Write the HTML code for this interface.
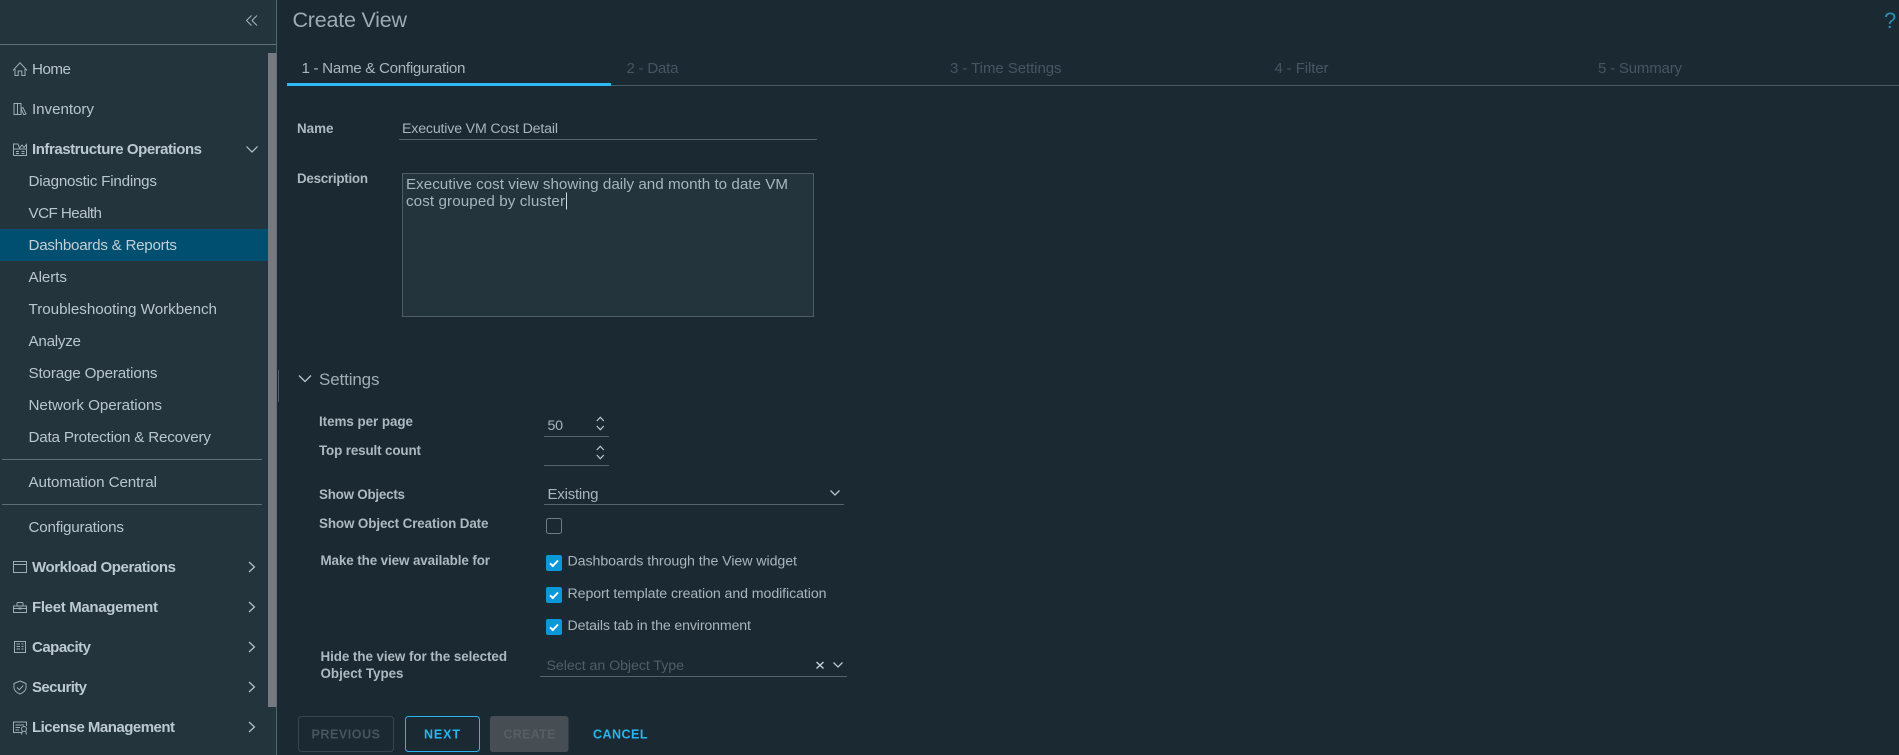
<!DOCTYPE html>
<html lang="en">
<head>
<meta charset="utf-8">
<title>Create View</title>
<style>
html,body{margin:0;padding:0;width:1899px;height:755px;overflow:hidden;background:#1b2a32}
svg{display:block}
text{font-family:"Liberation Sans",Arial,sans-serif;white-space:pre}
.n{font-size:15.2px;fill:#bac6cd}
.b{font-size:15px;font-weight:bold;fill:#bcc9d1}
.l{font-size:13.4px;font-weight:bold;fill:#adb9c0}
.v{font-size:14.2px;fill:#a9b5bc}
.o{font-size:15px;fill:#465560}
.btn{font-size:12.5px;font-weight:bold}
.ic{fill:none;stroke:#9eacb4;stroke-width:1}
.ch{fill:none;stroke:#b9c5cc;stroke-width:1.4}
</style>
</head>
<body>
<svg width="1899" height="755" viewBox="0 0 1899 755" xmlns="http://www.w3.org/2000/svg">
<rect width="1899" height="755" fill="#1b2a32"/>
<!-- sidebar -->
<rect x="0" y="0" width="276" height="755" fill="#23343d"/>
<rect x="276" y="0" width="1" height="755" fill="#55646c"/>
<rect x="0" y="44" width="276" height="1" fill="#5f6f77"/>
<rect x="0" y="229" width="268" height="32" fill="#004f70"/>
<rect x="268" y="53" width="8.5" height="654" fill="#747a80"/>
<rect x="278" y="370" width="1" height="32" fill="#4f5e66"/>
<path class="ch" d="M251.5 15.5 246.5 20.5 251.5 25.5M257 15.5 252 20.5 257 25.5" style="stroke-width:1;stroke:#a9b6bd"/>
<!-- icons -->
<path class="ic" d="M13 70.5 20 62.8 27 70.5M15 69V75.5H18.2V71H21.8V75.5H25V69"/>
<path class="ic" d="M14 103.5H17.5V114.5H14ZM17.5 103.5H21V114.5H17.5ZM21 108.5 23 107.5 26 114 23.8 114.8Z"/>
<path class="ic" d="M13.5 155.5V143.5M13.5 155.5H26.5V144.5L24 147.5 22 145 19.5 148 18 144H13.5M16 151.5H19M16 153.5H19M21.5 151.5H24.5M21.5 153.5H24.5M13.5 149H26.5"/>
<path class="ic" d="M13.5 561.5H26.5V572.5H13.5ZM13.5 564.5H26.5"/>
<path class="ic" d="M13.5 606H26.5V612.5H13.5ZM17 606V603.5Q17 602.5 18 602.5H22Q23 602.5 23 603.5V606M13.5 608.5H18.5M21.5 608.5H26.5"/>
<rect x="18.5" y="607.5" width="3" height="2" fill="#9eacb4"/>
<path class="ic" d="M14.5 641.5H25.5V652.5H14.5ZM16.5 644H20M16.5 646.5H20M16.5 649H20M21.5 644H23.5M21.5 646.5H23.5M21.5 649H23.5"/>
<path class="ic" d="M20 681 26 683.5V687.5Q26 691.5 20 694 14 691.5 14 687.5V683.5ZM17 687.5 19.3 689.8 23.2 685.5"/>
<path class="ic" d="M22 732.5H13.5V722H26.5V726M15.5 725H24M15.5 727.5H20M15.5 730H19"/>
<circle class="ic" cx="24" cy="729" r="2.5"/>
<path class="ic" d="M22.3 731 21.5 734.5M25.7 731 26.5 734.5"/>
<!-- nav text -->
<text class="n" x="32" y="74" textLength="39">Home</text>
<text class="n" x="32" y="114" textLength="62">Inventory</text>
<text class="b" x="32" y="154" textLength="170">Infrastructure Operations</text>
<text class="n" x="28.5" y="186" textLength="128.5">Diagnostic Findings</text>
<text class="n" x="28.5" y="218" textLength="73.5">VCF Health</text>
<text class="n" x="28.5" y="250" textLength="148.5" style="fill:#c3cfd6">Dashboards &amp; Reports</text>
<text class="n" x="28.5" y="282" textLength="38.5">Alerts</text>
<text class="n" x="28.5" y="314" textLength="188.5">Troubleshooting Workbench</text>
<text class="n" x="28.5" y="346" textLength="52.5">Analyze</text>
<text class="n" x="28.5" y="378" textLength="129">Storage Operations</text>
<text class="n" x="28.5" y="410" textLength="133.5">Network Operations</text>
<text class="n" x="28.5" y="442" textLength="182.5">Data Protection &amp; Recovery</text>
<rect x="2" y="459" width="260" height="1" fill="#5f6f77"/>
<text class="n" x="28.5" y="487" textLength="128.5">Automation Central</text>
<rect x="2" y="504" width="260" height="1" fill="#5f6f77"/>
<text class="n" x="28.5" y="532" textLength="95.5">Configurations</text>
<text class="b" x="32" y="572" textLength="144">Workload Operations</text>
<text class="b" x="32" y="612" textLength="126">Fleet Management</text>
<text class="b" x="32" y="652" textLength="59">Capacity</text>
<text class="b" x="32" y="692" textLength="55">Security</text>
<text class="b" x="32" y="732" textLength="143">License Management</text>
<path class="ch" d="M246.5 146.5 252 152 257.5 146.5" style="stroke-width:1.2"/>
<path class="ch" d="M249 562 254.5 567 249 572M249 602 254.5 607 249 612M249 642 254.5 647 249 652M249 682 254.5 687 249 692M249 722 254.5 727 249 732" style="stroke-width:1.2"/>
<!-- header -->
<text x="292.5" y="27" font-size="21.5" textLength="114.5" fill="#9dabb3">Create View</text>
<text x="1884" y="28" font-size="22" textLength="11" fill="#2a8fb6">?</text>
<!-- tabs -->
<rect x="611" y="85" width="1288" height="1" fill="#4a5a62"/>
<rect x="287" y="83" width="324" height="3" fill="#2fb7f3"/>
<text class="n" x="301.5" y="73" textLength="164" style="fill:#aab6bd">1 - Name &amp; Configuration</text>
<text class="o" x="626.5" y="73" textLength="52">2 - Data</text>
<text class="o" x="950" y="73" textLength="111.5">3 - Time Settings</text>
<text class="o" x="1274.5" y="73" textLength="54">4 - Filter</text>
<text class="o" x="1598" y="73" textLength="84">5 - Summary</text>
<!-- name -->
<text class="l" x="297" y="133" textLength="36.5">Name</text>
<text class="v" x="402" y="133" textLength="156">Executive VM Cost Detail</text>
<rect x="399" y="139" width="418" height="1" fill="#55646c"/>
<!-- description -->
<text class="l" x="297" y="183" textLength="71">Description</text>
<rect x="402.5" y="173.5" width="411" height="143" fill="#23343d" stroke="#4f5e66"/>
<text class="n" x="406" y="189" textLength="382" style="fill:#a9b5bc">Executive cost view showing daily and month to date VM</text>
<text class="n" x="406" y="206" textLength="159" style="fill:#a9b5bc">cost grouped by cluster</text>
<rect x="566" y="192.5" width="1" height="17" fill="#d5dde2"/>
<!-- settings -->
<path class="ch" d="M299 375.5 305 381.5 311 375.5" style="stroke-width:1.3"/>
<text x="319" y="385" font-size="17" textLength="60.5" fill="#a0adb4">Settings</text>
<text class="l" x="319" y="426" textLength="94">Items per page</text>
<text class="v" x="547.5" y="430" textLength="15.5">50</text>
<rect x="544" y="436" width="65" height="1" fill="#55646c"/>
<path class="ch" d="M596.8 421 600.3 417.3 603.8 421M596.8 426 600.3 429.7 603.8 426" style="stroke-width:1.2"/>
<text class="l" x="319" y="455" textLength="102">Top result count</text>
<rect x="544" y="465" width="65" height="1" fill="#55646c"/>
<path class="ch" d="M596.8 450 600.3 446.3 603.8 450M596.8 455 600.3 458.7 603.8 455" style="stroke-width:1.2"/>
<text class="l" x="319" y="499" textLength="86">Show Objects</text>
<text x="547.5" y="499" font-size="15" textLength="51" fill="#a9b5bc">Existing</text>
<rect x="544" y="504" width="300" height="1" fill="#55646c"/>
<path class="ch" d="M830.5 490.5 835 495 839.5 490.5" style="stroke-width:1.3"/>
<text class="l" x="319" y="528" textLength="169.5">Show Object Creation Date</text>
<rect x="546.5" y="518.5" width="15" height="15" rx="2" fill="none" stroke="#6f7c84"/>
<text class="l" x="320.5" y="565" textLength="169.5">Make the view available for</text>
<rect x="546" y="555" width="16" height="16" rx="2" fill="#0a99d8"/>
<path d="M550 563.3 552.8 566 558 560.5" fill="none" stroke="#fff" stroke-width="2"/>
<text class="v" x="567.5" y="565.5" textLength="229.5">Dashboards through the View widget</text>
<rect x="546" y="587" width="16" height="16" rx="2" fill="#0a99d8"/>
<path d="M550 595.3 552.8 598 558 592.5" fill="none" stroke="#fff" stroke-width="2"/>
<text class="v" x="567.5" y="598" textLength="259">Report template creation and modification</text>
<rect x="546" y="619" width="16" height="16" rx="2" fill="#0a99d8"/>
<path d="M550 627.3 552.8 630 558 624.5" fill="none" stroke="#fff" stroke-width="2"/>
<text class="v" x="567.5" y="630" textLength="183.5">Details tab in the environment</text>
<text class="l" x="320.5" y="661" textLength="186.5">Hide the view for the selected</text>
<text class="l" x="320.5" y="678" textLength="83">Object Types</text>
<text class="v" x="546.5" y="670" textLength="137.5" style="fill:#4f5d66">Select an Object Type</text>
<rect x="540" y="676" width="307" height="1" fill="#55646c"/>
<path d="M816.5 662 823.5 668.5M823.5 662 816.5 668.5" fill="none" stroke="#c8d2d8" stroke-width="1.4"/>
<path class="ch" d="M833.5 662.5 838 667 842.5 662.5" style="stroke-width:1.3"/>
<!-- buttons -->
<rect x="298.5" y="716.5" width="95" height="35" rx="3" fill="none" stroke="#37464e"/>
<text class="btn" x="311.5" y="738.5" textLength="68.5" fill="#47555d">PREVIOUS</text>
<rect x="405.5" y="716.5" width="74" height="35" rx="3" fill="none" stroke="#2bb4f0"/>
<text class="btn" x="424" y="738.5" textLength="36" fill="#29b5f0">NEXT</text>
<rect x="490" y="716" width="78.5" height="36" rx="3" fill="#464e53"/>
<text class="btn" x="503.5" y="738.5" textLength="52" fill="#585f64">CREATE</text>
<text class="btn" x="593" y="738.5" textLength="54.5" fill="#29b5f0">CANCEL</text>
</svg>
</body>
</html>
